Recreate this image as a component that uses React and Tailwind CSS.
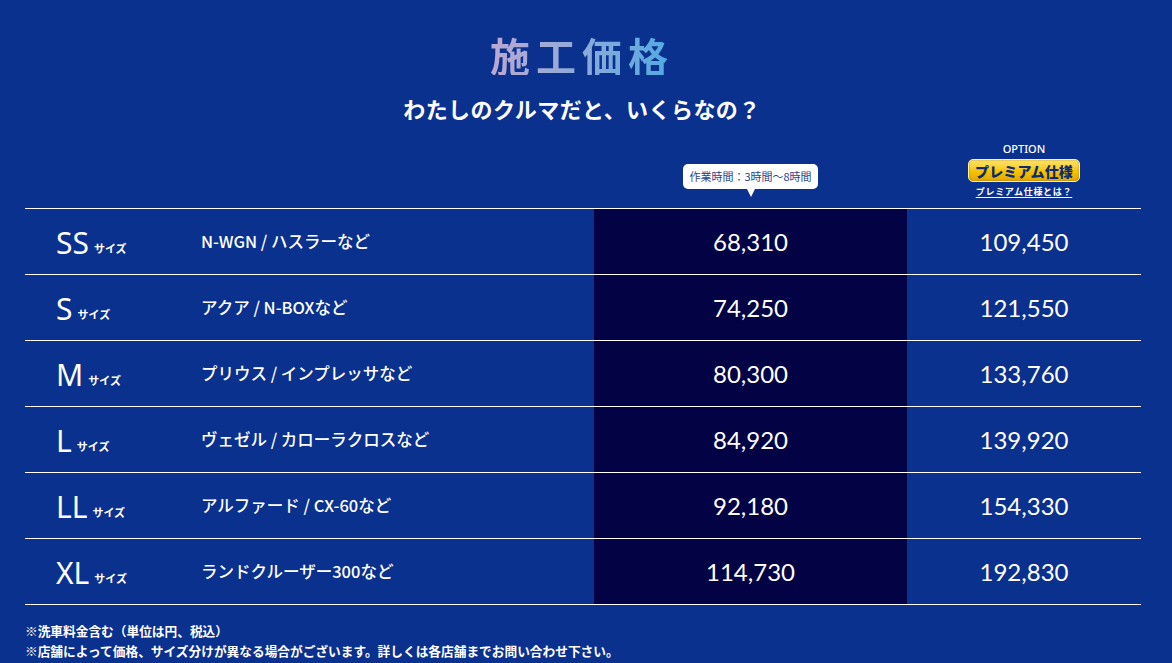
import React from 'react';

const JP = { fontFamily: '"Noto Sans CJK JP", "Noto Sans", sans-serif' };
const LATO = { fontFamily: 'Lato, "Noto Sans CJK JP", sans-serif' };
const NOTO = { fontFamily: '"Noto Sans", "Noto Sans CJK JP", sans-serif' };

const ROWS = [
  { size: 'SS', car: 'N-WGN / ハスラーなど', price: '68,310', premium: '109,450' },
  { size: 'S', car: 'アクア / N-BOXなど', price: '74,250', premium: '121,550' },
  { size: 'M', car: 'プリウス / インプレッサなど', price: '80,300', premium: '133,760' },
  { size: 'L', car: 'ヴェゼル / カローラクロスなど', price: '84,920', premium: '139,920' },
  { size: 'LL', car: 'アルファード / CX-60など', price: '92,180', premium: '154,330' },
  { size: 'XL', car: 'ランドクルーザー300など', price: '114,730', premium: '192,830' },
];

function PriceRow({ row }) {
  return (
    <div className="flex h-[66px] border-t border-white">
      <div className="w-[176px] flex items-center pl-[31px] pt-[2px]">
        <span className="text-[30px] leading-none text-white" style={NOTO}>{row.size}</span>
        <span className="ml-[5px] mt-[12px] text-[11px] font-bold text-white" style={JP}>サイズ</span>
      </div>
      <div className="w-[393px] flex items-center text-[16.5px] font-medium text-white" style={JP}>
        {row.car}
      </div>
      <div className="w-[313px] bg-[#020245] flex items-center justify-center text-[24px] text-white" style={LATO}>
        {row.price}
      </div>
      <div className="flex-1 flex items-center justify-center text-[24px] text-white" style={LATO}>
        {row.premium}
      </div>
    </div>
  );
}

export default function App() {
  return (
    <div className="w-[1172px] h-[663px] bg-[#0b318f] overflow-hidden" style={JP}>
      <div className="flex flex-col items-center pt-[35px] pr-[8px]">
        <h1
          className="text-[40px] font-bold leading-none tracking-[0.15em] bg-gradient-to-r from-[#bba8d2] to-[#4aaae2] bg-clip-text text-transparent"
          style={JP}
        >
          施工価格
        </h1>
        <p className="mt-[22px] text-[22px] font-bold leading-none text-white tracking-[0.02em]">
          わたしのクルマだと、いくらなの？
        </p>
      </div>

      <div className="ml-[25px] mr-[31px] mt-[22px]">
        <div className="flex h-[67px]">
          <div className="w-[569px]" />
          <div className="w-[313px] flex flex-col items-center justify-end pb-[19px]">
            <div className="relative bg-white rounded-[5px] px-[6px] h-[25px] flex items-center">
              <span className="text-[11px] text-[#2b3f8f]">作業時間：3時間〜8時間</span>
              <span className="absolute left-1/2 -translate-x-1/2 -bottom-[8px] w-0 h-0 border-l-[4px] border-r-[4px] border-t-[8px] border-l-transparent border-r-transparent border-t-white" />
            </div>
          </div>
          <div className="flex-1 flex flex-col items-center pt-[2px]">
            <span className="text-[11px] font-medium text-white leading-none" style={NOTO}>OPTION</span>
            <div className="mt-[5px] h-[23px] px-[6px] rounded-[5px] bg-gradient-to-b from-[#ffe566] via-[#f7c600] to-[#e2a800] border border-[#fff3a0] flex items-center shadow-[inset_0_0_2px_rgba(120,80,0,0.6)]">
              <span className="text-[14px] font-black text-[#0b2a7a] leading-none tracking-[0.01em]">プレミアム仕様</span>
            </div>
            <a className="mt-[5px] text-[9px] font-bold text-white underline underline-offset-2 tracking-[0.08em] leading-none">プレミアム仕様とは？</a>
          </div>
        </div>

        <div className="border-b border-white">
          {ROWS.map((row) => (
            <PriceRow key={row.size} row={row} />
          ))}
        </div>

        <div className="mt-[16px] text-[12.7px] font-bold text-white leading-[20px]">
          <p>※洗車料金含む（単位は円、税込）</p>
          <p>※店舗によって価格、サイズ分けが異なる場合がございます。詳しくは各店舗までお問い合わせ下さい。</p>
        </div>
      </div>
    </div>
  );
}
